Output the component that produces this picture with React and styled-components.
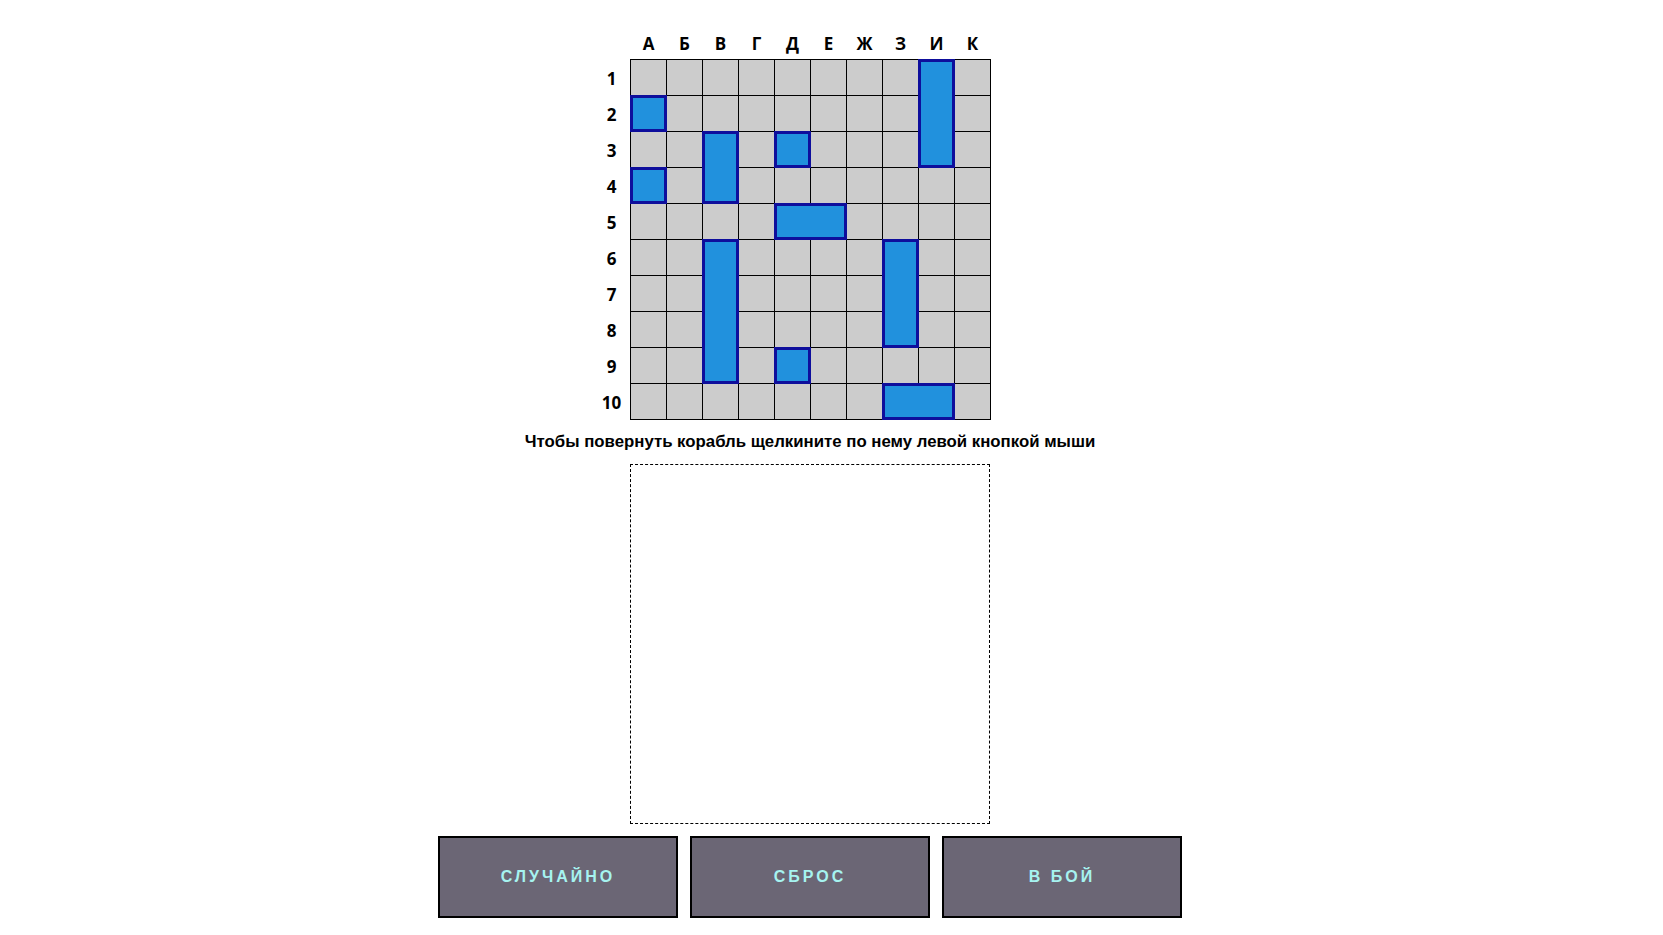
import React from 'react';
import styled, { createGlobalStyle } from 'styled-components';

const GlobalStyle = createGlobalStyle`
  html, body {
    margin: 0;
    padding: 0;
    background: #fff;
  }
  * {
    box-sizing: border-box;
  }
`;

const Page = styled.div`
  width: 1620px;
  padding-top: 29px;
  display: flex;
  flex-direction: column;
  align-items: center;
`;

const Field = styled.div`
  display: grid;
  grid-template-columns: 36px 361px 36px;
  grid-template-rows: 30px 361px;
`;

const Letters = styled.div`
  grid-column: 2;
  grid-row: 1;
  display: grid;
  grid-template-columns: repeat(10, 36px);
  padding-left: 1px;
  padding-bottom: 2px;
`;

const Numbers = styled.div`
  grid-column: 1;
  grid-row: 2;
  display: grid;
  grid-template-rows: repeat(10, 36px);
  padding-top: 1px;
`;

const Label = styled.div`
  display: flex;
  align-items: center;
  justify-content: center;
  font-family: 'Open Sans', 'Noto Sans', sans-serif;
  font-weight: 700;
  font-size: 17px;
  color: #000;
`;

const Board = styled.div`
  grid-column: 2;
  grid-row: 2;
  display: grid;
  grid-template-columns: repeat(10, 36px);
  grid-template-rows: repeat(10, 36px);
  border-left: 1px solid #000;
  border-top: 1px solid #000;
`;

const Cell = styled.div`
  background: #cccccc;
  border-right: 1px solid #000;
  border-bottom: 1px solid #000;
`;

const Ship = styled.div`
  margin: -1px 0 0 -1px;
  background: #2191dd;
  border: 3px solid #0e0e9c;
  z-index: 1;
`;

const Hint = styled.p`
  margin: 12px 0 0;
  line-height: 20px;
  font-family: 'Liberation Sans', Arial, sans-serif;
  font-weight: 700;
  font-size: 16.8px;
  color: #000;
`;

const Dock = styled.div`
  margin-top: 12px;
  width: 360px;
  height: 360px;
  border: 1px dashed #000;
`;

const Buttons = styled.div`
  margin-top: 12px;
  display: flex;
  gap: 12px;
`;

const Button = styled.button`
  width: 240px;
  height: 82px;
  background: #6b6675;
  border: 2px solid #000;
  color: #a6f3f0;
  font-family: 'Liberation Sans', Arial, sans-serif;
  font-weight: 700;
  font-size: 16px;
  letter-spacing: 3px;
  text-transform: uppercase;
  cursor: pointer;
`;

const letters = ['А', 'Б', 'В', 'Г', 'Д', 'Е', 'Ж', 'З', 'И', 'К'];

// col, row, length, vertical
const ships = [
  { c: 8, r: 0, n: 3, v: true },
  { c: 0, r: 1, n: 1, v: false },
  { c: 2, r: 2, n: 2, v: true },
  { c: 4, r: 2, n: 1, v: false },
  { c: 0, r: 3, n: 1, v: false },
  { c: 4, r: 4, n: 2, v: false },
  { c: 2, r: 5, n: 4, v: true },
  { c: 7, r: 5, n: 3, v: true },
  { c: 4, r: 8, n: 1, v: false },
  { c: 7, r: 9, n: 2, v: false },
];

const App = () => {
  const cells = [];
  for (let r = 0; r < 10; r++) {
    for (let c = 0; c < 10; c++) {
      cells.push(<Cell key={`${r}-${c}`} style={{ gridColumn: c + 1, gridRow: r + 1 }} />);
    }
  }

  return (
    <Page>
      <GlobalStyle />
      <Field>
        <Letters>
          {letters.map(l => <Label key={l}>{l}</Label>)}
        </Letters>
        <Numbers>
          {Array.from({ length: 10 }, (_, i) => <Label key={i}>{i + 1}</Label>)}
        </Numbers>
        <Board>
          {cells}
          {ships.map((s, i) => (
            <Ship
              key={i}
              style={{
                gridColumn: `${s.c + 1} / span ${s.v ? 1 : s.n}`,
                gridRow: `${s.r + 1} / span ${s.v ? s.n : 1}`,
              }}
            />
          ))}
        </Board>
      </Field>
      <Hint>Чтобы повернуть корабль щелкините по нему левой кнопкой мыши</Hint>
      <Dock />
      <Buttons>
        <Button>Случайно</Button>
        <Button>Сброс</Button>
        <Button>В бой</Button>
      </Buttons>
    </Page>
  );
};

export default App;
